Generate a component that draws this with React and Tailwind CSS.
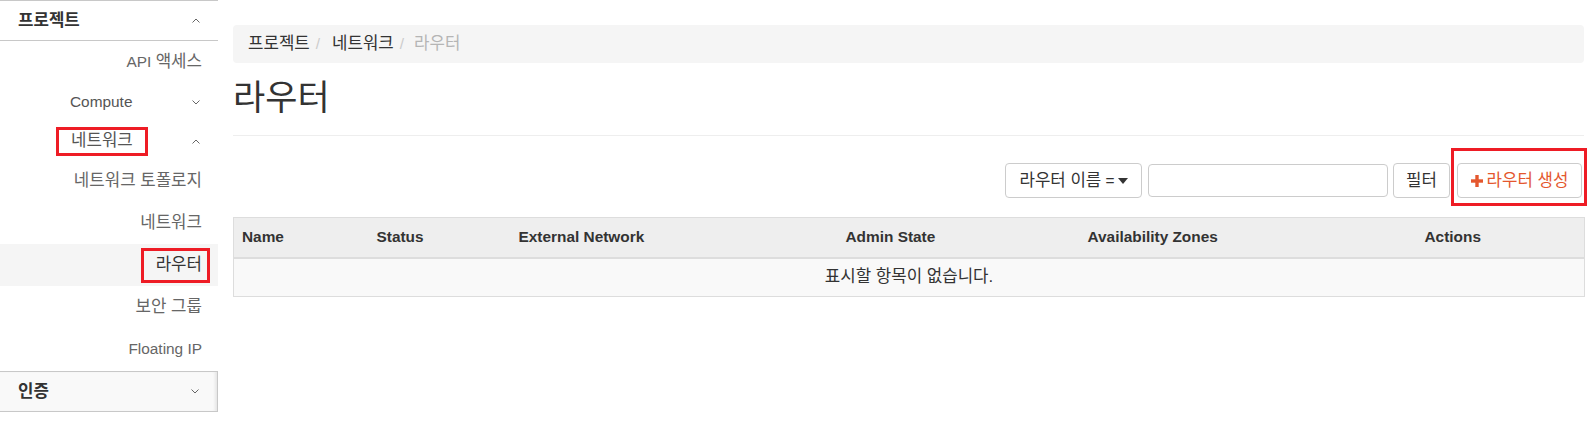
import React from "react";

const FONT = { fontFamily: '"Liberation Sans", "Noto Sans CJK KR", sans-serif' };

function K({ children, className = "" }) {
  return <span className={"text-[16.8px] " + className}>{children}</span>;
}

function ChevronUp() {
  return (
    <svg width="8" height="5" viewBox="0 0 8 5" className="block">
      <polyline points="0.5,4.5 4,1 7.5,4.5" fill="none" stroke="#666" strokeWidth="1" />
    </svg>
  );
}
function ChevronDown() {
  return (
    <svg width="8" height="5" viewBox="0 0 8 5" className="block">
      <polyline points="0.5,0.5 4,4 7.5,0.5" fill="none" stroke="#666" strokeWidth="1" />
    </svg>
  );
}

function RedBox({ className }) {
  return <span className={"pointer-events-none absolute border-[3px] border-[#ee1c25] " + className} />;
}

function SubItem({ children, active }) {
  return (
    <div className={"flex h-[42px] items-center justify-end pr-[16px] " + (active ? "bg-[#f5f5f5] text-[#333]" : "text-[#666]")}>
      {children}
    </div>
  );
}

function Sidebar() {
  return (
    <aside className="w-[218px] shrink-0 text-[15.4px] leading-[22px]">
      <div className="flex h-[41px] items-center justify-between border-y border-[#c8c8c8] bg-white pl-[18px] pr-[18px]">
        <K className="font-bold text-[#333]">프로젝트</K>
        <ChevronUp />
      </div>
      <div className="flex h-[41px] items-center justify-end pr-[16px] text-[#666]">
        <span>
          API <K>액세스</K>
        </span>
      </div>
      <div className="flex h-[40px] items-center justify-between pl-[70px] pr-[18px] text-[#555]">
        <span>Compute</span>
        <ChevronDown />
      </div>
      <div className="flex h-[38px] items-center justify-between pl-[71px] pr-[18px] text-[#555]">
        <span className="relative">
          <K>네트워크</K>
          <RedBox className="-left-[15px] -right-[15px] -top-[3px] -bottom-[4px]" />
        </span>
        <ChevronUp />
      </div>
      <SubItem>
        <K>네트워크 토폴로지</K>
      </SubItem>
      <SubItem>
        <K>네트워크</K>
      </SubItem>
      <SubItem active>
        <span className="relative">
          <K>라우터</K>
          <RedBox className="-left-[15px] -right-[8px] -top-[6px] -bottom-[7px]" />
        </span>
      </SubItem>
      <SubItem>
        <K>보안 그룹</K>
      </SubItem>
      <SubItem>Floating IP</SubItem>
      <div className="mt-[1px] flex h-[41px] items-center justify-between border-y border-r border-[#c8c8c8] bg-[#f9f9f9] pl-[18px] pr-[18px] shadow-[inset_-3px_0_3px_-1px_rgba(0,0,0,0.08)]">
        <K className="font-bold text-[#333]">인증</K>
        <ChevronDown />
      </div>
    </aside>
  );
}

function Caret() {
  return (
    <svg width="10" height="6" viewBox="0 0 10 6" className="ml-[3px] block">
      <polygon points="0,0 10,0 5,6" fill="#333" />
    </svg>
  );
}

function Plus() {
  return (
    <svg width="12" height="12" viewBox="0 0 12 12" className="mr-[4px] block">
      <rect x="4.3" y="0" width="3.4" height="12" fill="#e4572e" />
      <rect x="0" y="4.3" width="12" height="3.4" fill="#e4572e" />
    </svg>
  );
}

const cols = [
  { name: "Name", w: 135 },
  { name: "Status", w: 142 },
  { name: "External Network", w: 327 },
  { name: "Admin State", w: 242 },
  { name: "Availability Zones", w: 337 },
  { name: "Actions", w: 168 },
];

function Main() {
  return (
    <main className="min-w-0 flex-1 pl-[15px] pr-[6px] pt-[25px] text-[15.4px] leading-[22px] text-[#333]">
      <div className="flex h-[38px] items-center rounded-[4px] bg-[#f5f5f5] px-[15px]">
        <K className="text-[#333]">프로젝트</K>
        <span className="pl-[6px] pr-[8px] text-[#ccc]">/</span>
        <K className="ml-[4px] text-[#333]">네트워크</K>
        <span className="pl-[6px] pr-[8px] text-[#ccc]">/</span>
        <K className="ml-[2px] text-[#b5b5b5]">라우터</K>
      </div>
      <div className="mt-[17px] border-b border-[#eee] pb-[19px]">
        <h1 className="text-[35px] font-normal leading-[36px] text-[#333]">라우터</h1>
      </div>
      <div className="mt-[27px] flex items-center justify-end pr-[2px]">
        <button className="flex h-[35px] w-[137px] items-center justify-center rounded-[4px] border border-[#ccc] bg-white text-[#333]">
          <K>라우터 이름</K>&nbsp;=<Caret />
        </button>
        <input className="ml-[6px] h-[33px] w-[240px] rounded-[4px] border border-[#ccc] bg-white" />
        <button className="ml-[5px] flex h-[35px] w-[57px] items-center justify-center rounded-[4px] border border-[#ccc] bg-white text-[#333]">
          <K>필터</K>
        </button>
        <span className="relative ml-[7px]">
          <button className="flex h-[35px] w-[125px] items-center justify-center rounded-[4px] border border-[#ccc] bg-white text-[#e4572e]">
            <Plus />
            <K>라우터 생성</K>
          </button>
          <RedBox className="-left-[6px] -right-[5px] -top-[15px] -bottom-[8px]" />
        </span>
      </div>
      <table className="mt-[19px] w-full table-fixed border-collapse border border-[#ddd]">
        <colgroup>
          {cols.map((c) => (
            <col key={c.name} style={{ width: c.w }} />
          ))}
        </colgroup>
        <thead>
          <tr className="h-[40px] border-b-2 border-[#ddd] bg-[#eee]">
            {cols.map((c) => (
              <th key={c.name} className="px-[8px] text-left font-bold text-[#333]">
                {c.name}
              </th>
            ))}
          </tr>
        </thead>
        <tbody>
          <tr className="h-[39px] bg-[#f9f9f9]">
            <td colSpan={6} className="px-[8px] text-center text-[#333]">
              <K>표시할 항목이 없습니다.</K>
            </td>
          </tr>
        </tbody>
      </table>
    </main>
  );
}

export default function App() {
  return (
    <div className="flex h-[421px] w-[1590px] overflow-hidden bg-white" style={FONT}>
      <Sidebar />
      <Main />
    </div>
  );
}
